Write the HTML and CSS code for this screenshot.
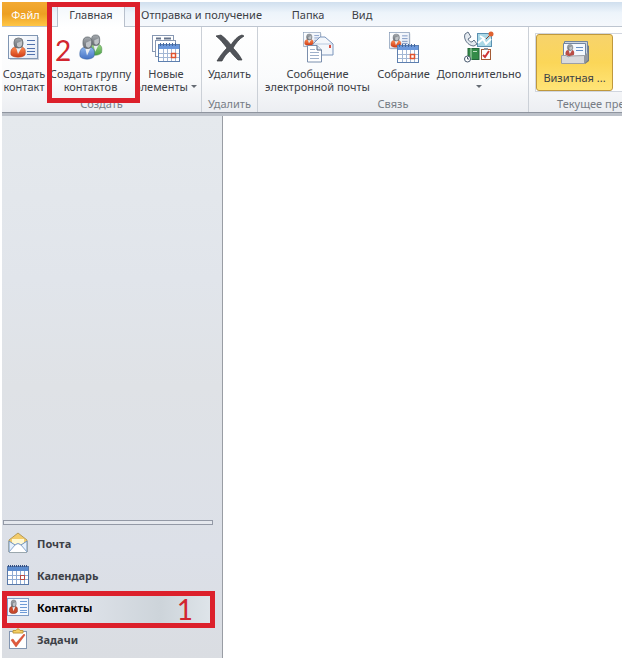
FILE: index.html
```html
<!DOCTYPE html>
<html lang="ru">
<head>
<meta charset="utf-8">
<meta name="viewport" content="width=device-width, initial-scale=1">
<title>Контакты</title>
<link rel="stylesheet" href="styles.css">
</head>
<body>
<svg class="defs" aria-hidden="true">
  <defs>
    <linearGradient id="gray" x2="0" y2="1"><stop offset="0" stop-color="#a4a9ae"/><stop offset="1" stop-color="#686d73"/></linearGradient>
    <linearGradient id="orange" x2="0" y2="1"><stop offset="0" stop-color="#ff8c50"/><stop offset="1" stop-color="#cf3b16"/></linearGradient>
    <linearGradient id="blue" x2="0" y2="1"><stop offset="0" stop-color="#8cb4ec"/><stop offset="1" stop-color="#4573c5"/></linearGradient>
    <linearGradient id="green" x2="0" y2="1"><stop offset="0" stop-color="#9bd483"/><stop offset="1" stop-color="#4aa045"/></linearGradient>
    <linearGradient id="paper" x2="1" y2="1"><stop offset="0" stop-color="#fff"/><stop offset="1" stop-color="#e2eaf6"/></linearGradient>
    <g id="person">
      <path d="M1 17C0 11 3 9 6 9L9 12L12 9C15 10 16 12 15 17C12 20 4 20 1 17Z"/>
      <path d="M6 9L8 16L12 9Z" fill="#e9edf2" stroke="none"/>
      <rect x="4" y="0" width="9" height="10" rx="4" fill="url(#gray)" stroke="#62686e" stroke-width=".7"/>
      <path d="M7 5L12 3V7Q10 11 7 8Z" fill="#bfc3c7" stroke="none"/>
    </g>
    <symbol id="card" viewBox="0 0 32 26">
      <rect x="2" y="2" width="29" height="23" fill="#c9cfd8"/>
      <rect x=".5" y=".5" width="29" height="23" fill="url(#paper)" stroke="#8096b3"/>
      <use href="#person" x="2" y="3" fill="url(#orange)" stroke="#b54120" stroke-width=".5"/>
      <path d="M19 5.500H27M19 9.500H27M19 13.500H27M19 16.500H27M19 19.500H27" stroke="#5273ae"/>
    </symbol>
    <symbol id="calendar" viewBox="0 0 22 20">
      <rect x=".5" y="2.500" width="21" height="17" fill="#fff" stroke="#5d7faf"/>
      <path d="M1 3H21V7H1Z" fill="#6b98dc"/>
      <path d="M1 11.500H21M1 15.500H21M5.500 7V19M9.500 7V19M13.500 7V19M17.500 7V19" stroke="#a3b7d4"/>
      <path d="M2.500 1V4M5.500 1V4M8.500 1V4M11.500 1V4M14.500 1V4M17.500 1V4" stroke="#4266a0"/>
      <rect x="13.500" y="11.500" width="4" height="4" fill="#fff" stroke="#e0522d" stroke-width="1.500"/>
    </symbol>
  </defs>
</svg>
<div class="window">
  <nav class="tabs" aria-label="Вкладки">
    <button class="tab file">Файл</button>
    <button class="tab active">Главная</button>
    <button class="tab send">Отправка и получение</button>
    <button class="tab folder">Папка</button>
    <button class="tab view">Вид</button>
  </nav>
  <header class="ribbon">
    <section class="group create">
      <div class="commands">
        <button class="command contact"><svg class="icon" viewBox="0 0 32 32"><use href="#card" x="0" y="4" width="32" height="26"/></svg><span>Создать<br>контакт</span></button>
        <button class="command people"><svg class="icon" viewBox="0 0 32 32">
          <use href="#person" transform="translate(13 4) scale(.9 1.050)" fill="url(#green)" stroke="#3c803c" stroke-width=".5"/>
          <use href="#person" transform="translate(4 6) scale(1 1.150)" fill="url(#blue)" stroke="#38629f" stroke-width=".5"/>
        </svg><span>Создать группу<br>контактов</span></button>
        <button class="command new"><svg class="icon" viewBox="0 0 32 32">
          <rect x="2.500" y="4.500" width="21" height="16" fill="#fff" stroke="#8798b3"/><path d="M6 7.500H11M14 7.500H21" stroke="#65738a" stroke-width="2"/>
          <rect x="5.500" y="9.500" width="20" height="16" fill="#fff" stroke="#8798b3"/>
          <use href="#calendar" x="8" y="11" width="22" height="20"/>
        </svg><span>Новые<br>элементы <i class="arrow"></i></span></button>
      </div>
      <h2>Создать</h2>
    </section>
    <section class="group delete">
      <div class="commands">
        <button class="command"><svg class="icon" viewBox="0 0 32 32"><path d="M2 5L7 4C11 7 14 10 17 14C20 9 24 5 28 4L30 5C25 8 22 12 19 17C23 21 26 25 28 29L24 29C21 26 18 23 16 20C12 23 10 26 8 30L3 30C6 25 9 21 13 17C9 12 6 8 2 5Z" fill="#51545a" stroke="#36393e" stroke-width=".7"/></svg><span>Удалить</span></button>
      </div>
      <h2>Удалить</h2>
    </section>
    <section class="group connect">
      <div class="commands">
        <button class="command message"><svg class="icon" viewBox="0 0 32 32">
          <use href="#card" x="1" y="1" width="19" height="16"/>
          <path d="M11 13L18 6H23L31 13V24H11Z" fill="#f4f7fb" stroke="#7b95bc"/><path d="M12 13H30" stroke="#b9c9df"/><rect x="27" y="14" width="2" height="3" fill="#d74f40"/>
          <path d="M5.500 14.500H15L19.500 19V31H5.500Z" fill="#fff" stroke="#7b8fad"/><path d="M15 14.500V19H19.500" fill="#dce5f0" stroke="#566985"/><path d="M8 18.500H13M8 21.500H17M8 24.500H17M8 27.500H17" stroke="#9fb1ca"/>
        </svg><span>Сообщение<br>электронной почты</span></button>
        <button class="command meeting"><svg class="icon" viewBox="0 0 32 32"><use href="#card" x="1" y="1" width="22" height="18"/><use href="#calendar" x="9" y="12" width="22" height="20"/></svg><span>Собрание</span></button>
        <button class="command more"><svg class="icon" viewBox="0 0 32 32">
          <path d="M2 3L5 1L8 6L5 8C6 10 7 11 9 11L11 9L14 13L11 15C5 15 0 8 2 3Z" fill="#e4eaf0" stroke="#627287"/>
          <rect x="14.500" y="2.500" width="14" height="13" fill="#a9d8e6" stroke="#5a90b1"/><path d="M15 12L20 8L23 13L28 8M17 5L22 8" fill="none" stroke="#fff" stroke-width="2"/><path d="M23 8L28 3" stroke="#833d28"/><circle cx="28" cy="3" r="2.500" fill="#df6231"/>
          <rect x="5" y="17.500" width="11" height="11" fill="#348b48" stroke="#23663a"/><path d="M8 17V29M10 20.500H14" stroke="#b9dfbd"/><circle cx="4.500" cy="28" r="3" fill="#fff" stroke="#46576d"/><path d="M4.500 26V28H6" fill="none" stroke="#46576d"/>
          <rect x="18.500" y="18.500" width="9" height="10" fill="#fff" stroke="#a45b36"/><rect x="21" y="17" width="4" height="2" fill="#8d9299"/><path d="M20 24L22 26L26 20" fill="none" stroke="#cf3535" stroke-width="2"/>
        </svg><span>Дополнительно<br><i class="arrow"></i></span></button>
      </div>
      <h2>Связь</h2>
    </section>
    <section class="group current">
      <div class="gallery">
        <button class="command selected"><svg class="icon" viewBox="0 0 32 32">
          <path d="M26 8L30 11V26L26 29Z" fill="#6f7883"/><path d="M5.500 6.500H28.500V20H5.500Z" fill="#cbd3de" stroke="#71849d"/><path d="M4.500 8.500H26.500V22H4.500Z" fill="#f4f8fe" stroke="#7185a1"/>
          <use href="#person" transform="translate(6 9.500) scale(.6)" fill="#b94d46"/><path d="M17 12.500H24M17 15.500H24" stroke="#668fc4"/>
          <path d="M2.500 20.500H7Q9 23 12 21L25.500 20.500V28.500H2.500Z" fill="#d9dadd" stroke="#9c9fa5"/><path d="M25 21L29 17V25L25 29Z" fill="#9297a0"/>
        </svg><span>Визитная ...</span></button>
      </div>
      <h2>Текущее пре</h2>
    </section>
  </header>
  <div class="workspace">
    <aside class="sidebar">
      <div class="splitter"></div>
      <nav aria-label="Разделы">
        <a class="item" href="#"><svg viewBox="0 0 22 22"><path d="M2 8L11 1L20 8V20H2Z" fill="#f3cc6c" stroke="#b49a5b"/><path d="M5 7H17V15H5Z" fill="#fff8d2"/><path d="M2 9L8 13Q11 10 14 13L20 9V20H2Z" fill="#e7f1fc" stroke="#6f91b9"/><path d="M2 20L8 13Q11 10 14 13L20 20" fill="#fff" stroke="#88a6cc"/></svg>Почта</a>
        <a class="item" href="#"><svg viewBox="0 0 22 22"><rect x=".5" y="2.500" width="21" height="18" fill="#fff" stroke="#5878a8"/><path d="M1 3H21V7H1Z" fill="#5b8bce"/><path d="M1 11.500H21M1 15.500H21M5.500 7V20M9.500 7V20M13.500 7V20M17.500 7V20" stroke="#8fabd3"/><path d="M1 2H21" stroke="#334e81" stroke-width="2" stroke-dasharray="1 1"/><rect x="13.500" y="11.500" width="4" height="4" fill="#fff" stroke="#bb4c45"/></svg>Календарь</a>
        <a class="item current-item" href="#"><svg viewBox="0 0 22 22"><rect x=".5" y="2.500" width="21" height="17" fill="#f5f9ff" stroke="#7f9cc4"/><use href="#person" transform="translate(2 4) scale(.55 .7)" fill="#c94a2c" stroke="#8a3522"/><path d="M13 5.500H20M13 8.500H20M13 11.500H20M13 14.500H20M13 16.500H20" stroke="#6f9bd6"/></svg>Контакты</a>
        <a class="item" href="#"><svg viewBox="0 0 22 22"><rect x="2.500" y="3.500" width="17" height="17" fill="#fff" stroke="#8295b1"/><path d="M6 5V2.500H9Q11 -1 13 2.500H16V5Z" fill="#f5cf63" stroke="#c39a3b"/><path d="M4 12L6 11L9 15L17 6L18 7L9 19Z" fill="#e2583a" stroke="#c0432b" stroke-width=".5"/></svg>Задачи</a>
      </nav>
    </aside>
    <main></main>
  </div>
  <div class="callout step-two"><b>2</b></div>
  <div class="callout step-one"><b>1</b></div>
</div>
</body>
</html>
```
FILE: styles.css
```css
* { box-sizing: border-box; }
body {
  margin: 0;
  padding: 2px;
  height: 100vh;
  background: #fff;
  color: #3c4046;
  font: 11px/13px "Noto Sans", "Open Sans", sans-serif;
}
button {
  margin: 0;
  padding: 0;
  border: 0;
  background: none;
  color: inherit;
  font: inherit;
}
.defs { position: absolute; width: 0; height: 0; }
.window {
  position: relative;
  display: flex;
  flex-direction: column;
  height: 100%;
  overflow: hidden;
}
.tabs {
  display: flex;
  height: 25px;
  flex: none;
  background: linear-gradient(#d0dfee, #edf4fb 45%, #f5f8fc);
  border-bottom: 1px solid #bdc5d0;
}
.tab { height: 24px; white-space: nowrap; }
.file {
  width: 47px;
  background: linear-gradient(#f3aa33, #eda022 50%, #ffc646);
  color: #fff;
}
.active {
  width: 68px;
  height: 25px;
  margin-left: 8px;
  border: solid #b8c0cc;
  border-width: 0 1px;
  background: linear-gradient(#f1f6fb, #fff);
}
.send { width: 153px; }
.folder { width: 60px; }
.view { width: 48px; }
.ribbon {
  display: flex;
  flex: none;
  height: 86px;
  overflow: hidden;
  background: linear-gradient(#fff, #fafbfc 60%, #eceef2);
  border-bottom: 1px solid #8f959f;
}
.group {
  display: flex;
  flex: none;
  flex-direction: column;
  border-right: 1px solid #cbd0d7;
}
.create { width: 200px; }
.create .commands { justify-content: flex-start; }
.delete { width: 56px; }
.connect { width: 271px; }
.current { flex: 1; min-width: 0; overflow: hidden; border: 0; }
.commands { display: flex; height: 70px; justify-content: center; }
.command {
  display: flex;
  flex-direction: column;
  align-items: center;
  padding-top: 4px;
  white-space: nowrap;
}
.icon { width: 32px; height: 32px; flex: none; margin-bottom: 4px; }
.contact { width: 44px; }
.people { width: 89px; }
.new { width: 62px; }
.message { width: 109px; }
.meeting { width: 63px; }
.more { width: 88px; }
.group h2 {
  margin: 0;
  color: #777d86;
  font: inherit;
  text-align: center;
  white-space: nowrap;
}
.arrow {
  display: inline-block;
  border: solid transparent;
  border-width: 3px 3px 0;
  border-top-color: #656b73;
  vertical-align: 3px;
}
.gallery {
  height: 59px;
  margin: 6px 0 5px 6px;
  padding: 0;
  border: 1px solid #d1d6df;
  border-right: 0;
  background: #fff;
}
.selected {
  width: 77px;
  height: 57px;
  padding: 0;
  border: 1px solid #bf983d;
  border-radius: 3px;
  background: linear-gradient(#f7d36c, #fbd658 50%, #ffe477);
}
.current h2 { padding-left: 28px; text-align: left; }
.workspace {
  display: flex;
  flex: 1;
  min-height: 0;
  border-top: 3px solid #bcc1c9;
}
.sidebar {
  display: flex;
  flex-direction: column;
  width: 221px;
  flex: none;
  justify-content: flex-end;
  padding-bottom: 3px;
  border-right: 1px solid #999da4;
  background: linear-gradient(#e5e9ed, #e1e5eb 30%, #dfe2e6 50%, #dce0e8 80%, #dadde2);
}
.splitter {
  height: 5px;
  margin: 0 9px 2px 1px;
  border: 1px solid #9399a6;
  background: #e5e8ee;
}
.item {
  display: flex;
  height: 32px;
  align-items: center;
  gap: 8px;
  padding-left: 5px;
  color: #3c4046;
  font-weight: bold;
  text-decoration: none;
}
.item svg { width: 22px; height: 22px; }
.current-item {
  margin-right: 9px;
  background: linear-gradient(90deg, #e8ebf1, #dfe3ea 35%, #cdd4da 75%, #dfe5ea);
  color: #000;
}
main { flex: 1; background: #fff; }
.callout {
  position: absolute;
  border: 5px solid #dc202b;
  color: #d2252f;
  font: 28px/34px Lato, sans-serif;
  pointer-events: none;
}
.callout b { font-weight: normal; }
.step-two { top: 0; left: 45px; width: 93px; height: 101px; padding: 26px 3px; }
.step-one { bottom: 30px; left: 0; width: 213px; height: 37px; padding-right: 17px; line-height: 27px; text-align: right; }
```
